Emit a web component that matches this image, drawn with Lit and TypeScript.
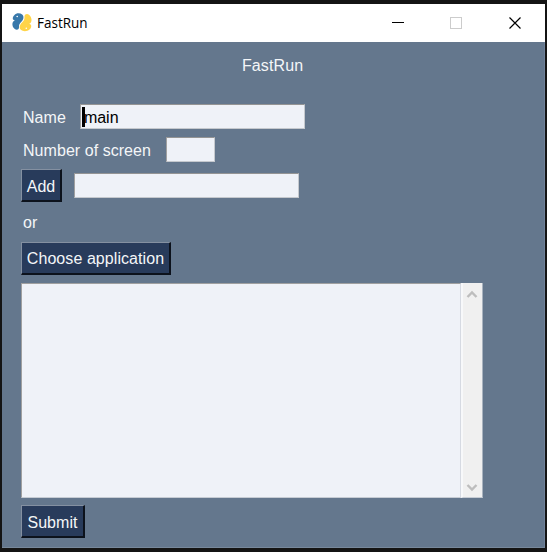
import { LitElement, html, css } from "lit";
import { customElement } from "lit/decorators.js";

@customElement("app-root")
export class AppRoot extends LitElement {
  static styles = css`
    :host {
      display: block;
      box-sizing: border-box;
      width: 547px;
      height: 552px;
      padding: 4px 2px;
      background: #141414;
      overflow: hidden;
      font: 16px/20px "Liberation Sans", Arial, sans-serif;
      color: #f4f6f8;
    }
    * { box-sizing: border-box; }
    .window { width: 543px; height: 544px; background: #64778d; border-bottom: 1px solid #77889b; border-right: 1px solid #70829a; }
    .titlebar { display: flex; align-items: center; width: 543px; height: 38px; padding-left: 9px; background: #fff; color: #000; }
    .logo { width: 22px; height: 22px; }
    .title { flex: 1; padding: 0 0 2px 4px; font: 15px/20px "Open Sans", "Noto Sans", sans-serif; }
    .title span { display: inline-block; transform: scaleX(0.9); transform-origin: left; }
    .control { display: block; width: 58px; height: 38px; }
    .control:last-child { width: 59px; }
    .form { display: flex; flex-direction: column; align-items: flex-start; padding-left: 19px; height: 505px; }
    .heading { align-self: stretch; height: 62px; padding: 14px 0 0 221px; letter-spacing: .1px; }
    .row { display: flex; align-items: center; }
    .name { height: 26px; gap: 15px; padding-left: 2px; }
    .number { height: 26px; margin-top: 7px; gap: 15px; padding-left: 2px; }
    .add { height: 33px; margin-top: 6px; gap: 12px; }
    .or { height: 20px; margin: 11px 0 9px 2px; }
    .label { white-space: nowrap; padding-top: 1px; letter-spacing: .05px; }
    .name .label { padding-top: 2px; }
    .field { height: 25px; background: #eff2f8; border: 1px solid; border-color: #949494 #c5c9ce #c5c9ce #a0a0a0; color: #000; display: flex; align-items: center; }
    .caret { width: 3px; height: 20px; background: #000; margin: -2px -1px 0 1px; }
    .name .field { width: 225px; margin-left: -1px; padding-top: 3px; align-self: flex-start; }
    .add .field { width: 225px; }
    .number .field { width: 49px; align-self: flex-start; }
    .button { height: 33px; padding: 2px 0 0; text-align: center; white-space: nowrap; font: inherit; letter-spacing: .07px; color: #f4f6f8; background: #283b5b; border: 2px solid; border-color: #8490a1 #0c121c #0c121c #8490a1; border-width: 1px 2px 2px 1px; }
    .row .button, .submit { padding-top: 3px; }
    .output { display: flex; width: 462px; height: 215px; margin: 8px 0 7px; }
    .area { width: 440px; background: #eff2f8; border: 1px solid; border-color: #a0a0a0 #d6dae2 #c6ccd4 #a0a0a0; }
    .scroll { display: flex; flex-direction: column; justify-content: space-between; width: 22px; background: #f0f0f0; border-left: 2px solid #f7f8fa; border-right: 1px solid #a9b3bf; border-bottom: 1px solid #c6ccd4; }
    .scroll svg { display: block; width: 19px; height: 20px; }
  `;

  render() {
    return html`
      <div class="window">
        <div class="titlebar">
          <svg class="logo" viewBox="0 0 22 22">
            <path d="M3.500 3C5 1 9 .8 11.200 2.500c2 1.800 1.500 5-.6 7C8.500 11.500 7.800 13 8 15.500c-.2 2.600-2.800 2.800-4.500 1.200C1 14.500.900 10.800 2.500 9.200l1.300-.8L2 7.500C1.400 6 2 4.200 3.500 3Z" fill="#3878aa"/>
            <path d="M13.500 4.200c.4-2.600 3-2.900 4.800-1.300 2.600 2.400 2.900 6.300 1.200 8l-1.200.9 1.600.9c.8 1.800.2 3.500-1.400 4.900-2.200 2-6.600 2.200-8.700.2-1.900-1.900-1.200-5 1-7.100 2.200-2 2.900-3.500 2.700-6.500Z" fill="#ffd448"/>
            <circle cx="6.200" cy="4.500" r=".8" fill="#fff"/><circle cx="15.300" cy="16.300" r=".8" fill="#fff"/>
          </svg>
          <div class="title"><span>FastRun</span></div>
          <svg class="control" viewBox="0 0 58 38"><path d="M22 18.500h12" stroke="#000"/></svg>
          <svg class="control" viewBox="0 0 58 38"><rect x="22.500" y="13.500" width="11" height="11" fill="none" stroke="#ccc"/></svg>
          <svg class="control" viewBox="0 0 59 38"><path d="M23.500 13.500l11 11m0-11l-11 11" stroke="#000" stroke-width="1.200"/></svg>
        </div>
        <div class="form">
          <div class="heading">FastRun</div>
          <div class="row name"><span class="label">Name</span><div class="field"><i class="caret"></i>main</div></div>
          <div class="row number"><span class="label">Number of screen</span><div class="field"></div></div>
          <div class="row add"><button class="button" style="width:41px">Add</button><div class="field"></div></div>
          <div class="or">or</div>
          <button class="button" style="width:150px">Choose application</button>
          <div class="output">
            <div class="area"></div>
            <div class="scroll">
              <svg viewBox="0 0 19 20"><path d="M4.500 14l4.500-4.500 4.500 4.500" fill="none" stroke="#bdbdbd" stroke-width="2.400"/></svg>
              <svg viewBox="0 0 19 20"><path d="M4.500 8l4.500 4.500L13.500 8" fill="none" stroke="#bdbdbd" stroke-width="2.400"/></svg>
            </div>
          </div>
          <button class="button submit" style="width:64px">Submit</button>
        </div>
      </div>
    `;
  }
}
